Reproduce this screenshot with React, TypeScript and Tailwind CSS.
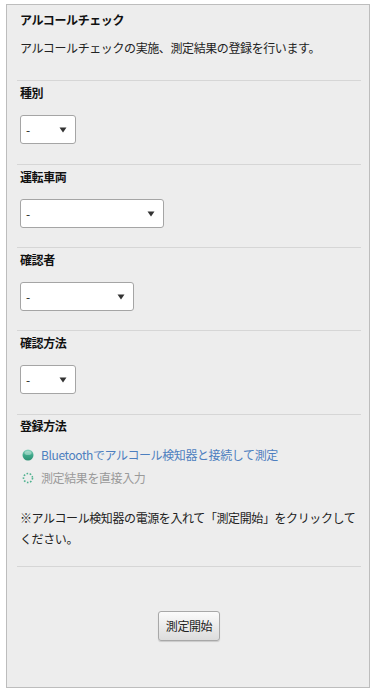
import { useState } from 'react';

const SECTIONS = [
  { key: 'kind', label: '種別', width: 'w-[56px]', gap: 'mt-[23px]' },
  { key: 'vehicle', label: '運転車両', width: 'w-[144px]', gap: 'mt-[20px]' },
  { key: 'checker', label: '確認者', width: 'w-[114px]', gap: 'mt-[19px]' },
  { key: 'method', label: '確認方法', width: 'w-[56px]', gap: 'mt-[19px]' },
];

function FakeSelect({ width }: { width: string }) {
  return (
    <div
      className={`${width} h-[29px] mt-[13px] flex items-center justify-between pl-[5px] pr-[8px] bg-white border border-[#a5a5a5] rounded-[3px] text-[12px] text-[#222]`}
    >
      <span>-</span>
      <svg width="8" height="6" viewBox="0 0 8 6">
        <path d="M0.5 0.5 H7.5 L4 5.5 Z" fill="#333" />
      </svg>
    </div>
  );
}

function RadioOn() {
  return (
    <svg width="12" height="12" viewBox="0 0 12 12" className="shrink-0">
      <defs>
        <linearGradient id="rg" x1="0" y1="0" x2="0" y2="1">
          <stop offset="0" stopColor="#8fd6c2" />
          <stop offset="0.5" stopColor="#3fa98a" />
          <stop offset="1" stopColor="#2b8f72" />
        </linearGradient>
      </defs>
      <circle cx="6" cy="6" r="5.5" fill="url(#rg)" />
      <ellipse cx="6" cy="4" rx="3.5" ry="2" fill="#ffffff" opacity="0.35" />
    </svg>
  );
}

function RadioOff() {
  return (
    <svg width="12" height="12" viewBox="0 0 12 12" className="shrink-0">
      <circle cx="6" cy="6" r="4.5" fill="none" stroke="#4fb28f" strokeWidth="1.6" strokeDasharray="1.6 1.6" />
    </svg>
  );
}

export default function App() {
  const [mode, setMode] = useState<'bt' | 'manual'>('bt');

  return (
    <div className="w-[376px] h-[693px] bg-white pt-[4px] px-[6px] font-['Noto_Sans_CJK_JP','Noto_Sans',sans-serif] text-[12px] leading-[18px] tracking-[-0.4px] text-[#222]">
      <div className="h-[684px] bg-[#ededed] border border-[#bdbdbd] pl-[10px] pr-[8px] pt-[6px]">
        <div className="px-[3px]">
          <h1 className="font-bold text-[#111]">アルコールチェック</h1>
          <p className="mt-[10px]">アルコールチェックの実施、測定結果の登録を行います。</p>
        </div>

        {SECTIONS.map((s) => (
          <div key={s.key} className={`${s.gap} border-t border-[#d6d6d6] px-[3px] pt-[3px]`}>
            <h2 className="font-bold text-[#111]">{s.label}</h2>
            <FakeSelect width={s.width} />
          </div>
        ))}

        <div className="mt-[20px] border-t border-[#d6d6d6] px-[3px] pt-[2px]">
          <h2 className="font-bold text-[#111]">登録方法</h2>
          <div className="mt-[11px] flex flex-col gap-[5px]">
            <button
              onClick={() => setMode('bt')}
              className={`flex items-center gap-[7px] pl-[2px] text-left ${mode === 'bt' ? 'text-[#4d7fbf]' : 'text-[#9a9a9a]'}`}
            >
              {mode === 'bt' ? <RadioOn /> : <RadioOff />}
              <span>Bluetoothでアルコール検知器と接続して測定</span>
            </button>
            <button
              onClick={() => setMode('manual')}
              className={`flex items-center gap-[7px] pl-[2px] text-left ${mode === 'manual' ? 'text-[#4d7fbf]' : 'text-[#9a9a9a]'}`}
            >
              {mode === 'manual' ? <RadioOn /> : <RadioOff />}
              <span>測定結果を直接入力</span>
            </button>
          </div>
          <p className="mt-[20px] leading-[21px]">
            ※アルコール検知器の電源を入れて「測定開始」をクリックしてください。
          </p>
        </div>

        <div className="mt-[17px] border-t border-[#d6d6d6] flex justify-center pt-[44px]">
          <button className="w-[62px] h-[30px] bg-gradient-to-b from-[#fbfbfb] to-[#dcdcdc] border border-[#a8a8a8] rounded-[3px] text-[12px] text-[#222] shadow-[0_1px_1px_rgba(0,0,0,0.15)]">
            測定開始
          </button>
        </div>
      </div>
    </div>
  );
}
